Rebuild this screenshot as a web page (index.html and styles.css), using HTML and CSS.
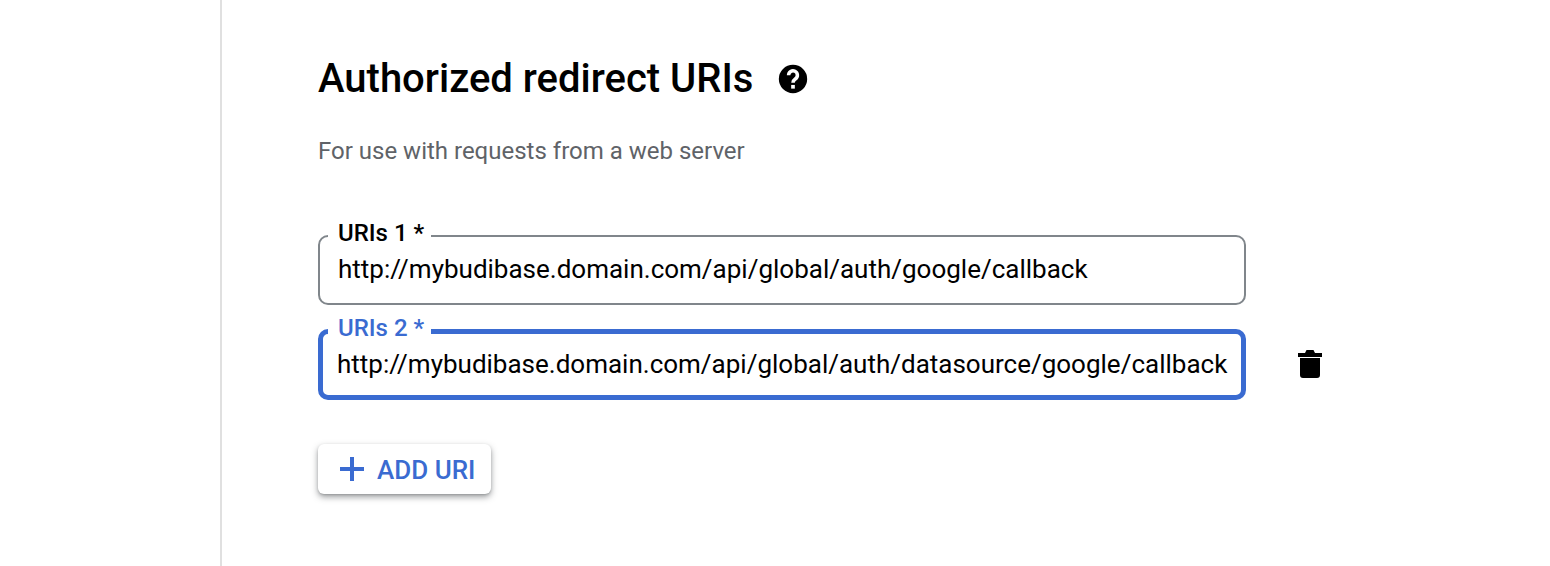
FILE: index.html
```html
<!DOCTYPE html>
<html lang="en">
<head>
<meta charset="utf-8">
<title>Authorized redirect URIs</title>
<link rel="stylesheet" href="styles.css">
</head>
<body>
<div class="page">
  <aside class="rail"></aside>
  <main class="content">
    <div class="title-row">
      <h1 class="title">Authorized redirect URIs</h1>
      <svg class="help" viewBox="0 0 24 24" aria-hidden="true"><circle cx="12" cy="12" r="10"/><path class="help-mark" d="M8.900 9.300a3.100 3.100 0 1 1 4.900 2.500c-1.100.8-1.800 1.300-1.800 2.900"/><rect class="help-dot" x="10.700" y="16.200" width="2.600" height="2.600"/></svg>
    </div>
    <p class="subtitle">For use with requests from a web server</p>
    <div class="fields">
      <div class="field-row">
        <div class="field">
          <span class="field-label">URIs 1 *</span>
          <span class="field-value">http://mybudibase.domain.com/api/global/auth/google/callback</span>
        </div>
      </div>
      <div class="field-row">
        <div class="field field-focus">
          <span class="field-label">URIs 2 *</span>
          <span class="field-value">http://mybudibase.domain.com/api/global/auth/datasource/google/callback</span>
        </div>
        <svg class="trash" viewBox="0 0 24 28" aria-hidden="true"><path d="M2 8h20v17a3 3 0 0 1-3 3H5a3 3 0 0 1-3-3zM0 3h7l1.500-3h7L17 3h7v4H0z"/></svg>
      </div>
    </div>
    <button class="add-btn" type="button">
      <svg class="plus" viewBox="0 0 24 24" aria-hidden="true"><path d="M10 0h4v10h10v4H14v10h-4V14H0v-4h10z"/></svg>
      <span class="add-label">ADD URI</span>
    </button>
  </main>
</div>
</body>
</html>
```
FILE: styles.css
```css
* { box-sizing: border-box; }
html, body { margin: 0; height: 100%; background: #fff; }
body { font-family: Roboto, "Liberation Sans", sans-serif; color: #000; overflow: hidden; }
.page { display: flex; height: 566px; }
.rail { width: 222px; flex: none; border-right: 2px solid #e0e0e0; }
.content { flex: 1; padding: 57px 0 0 96px; }
.title-row { display: flex; align-items: center; height: 44px; }
.title { margin: 0; font-size: 40px; line-height: 44px; font-weight: 500; }
.help { width: 34px; height: 34px; margin-left: 23px; flex: none; margin-top: -1px; }
.help-mark { fill: none; stroke: #fff; stroke-width: 2.500; }
.help-dot { fill: #fff; }
.subtitle { margin: 33px 0 0; font-size: 24px; line-height: 34px; color: #5f6368; }
.fields { margin-top: 67px; display: flex; flex-direction: column; gap: 24px; }
.field-row { display: flex; align-items: center; }
.field { position: relative; width: 928px; height: 70px; padding: 16px 18px 0; border: 2px solid #80868b; border-radius: 10px; }
.field-value { display: block; font-size: 26px; line-height: 32px; white-space: nowrap; }
.field-label { position: absolute; left: 8px; top: -17px; padding: 0 7px 0 10px; background: #fff; font-size: 24px; line-height: 26px; font-weight: 500; white-space: nowrap; }
.field-focus { height: 71px; padding: 14px 14px 0; border: 5px solid #3a6bd1; }
.field-focus .field-label { left: 5px; top: -19px; color: #3a6bd1; }
.trash { width: 24px; height: 28px; margin-left: 52px; margin-top: -1px; flex: none; }
.add-btn { display: flex; align-items: center; margin-top: 44px; width: 173px; height: 50px; padding: 0 0 0 22px; border: 0; border-radius: 6px; background: #fff; color: #3a6bd1; font: 500 26px Roboto, "Liberation Sans", sans-serif; box-shadow: 0 3px 6px rgba(60,64,67,.5), 0 1px 2px rgba(60,64,67,.2); }
.plus { width: 24px; height: 24px; fill: #3a6bd1; margin-right: 13px; flex: none; }
.add-label { padding-top: 2px; }
```
